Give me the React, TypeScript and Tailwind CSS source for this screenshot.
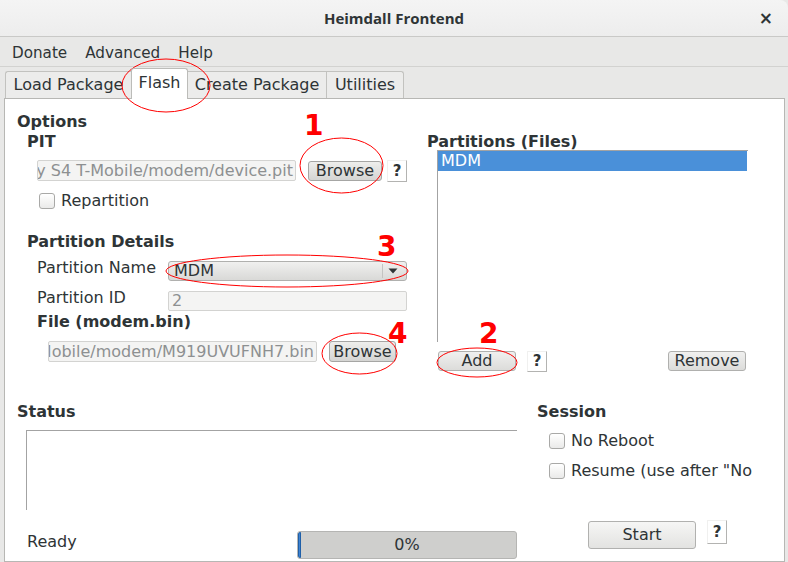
import React from "react";

function QBtn({ h = 22 }: { h?: number }) {
  return (
    <div
      className={`w-[20px] ${h === 22 ? "h-[22px]" : h === 21 ? "h-[21px]" : "h-[24px]"} border-t border-l border-t-[#f0f0ef] border-l-[#f0f0ef] border-r border-b border-r-[#b3b3b1] border-b-[#b3b3b1] bg-white flex items-center justify-center font-bold text-[15px] leading-none text-[#2e3436]`}
    >
      ?
    </div>
  );
}

function Check({ label }: { label: string }) {
  return (
    <div className="flex items-center h-[20px] gap-[6px] whitespace-nowrap">
      <div className="w-[16px] h-[16px] shrink-0 rounded-[3px] border border-[#a9a9a7] bg-linear-to-b from-white to-[#eaeae9]" />
      <span>{label}</span>
    </div>
  );
}

function Field({ w, text }: { w: string; text: string }) {
  return (
    <div
      className={`${w} h-[21px] rounded-[2px] border border-[#d3d3d1] bg-[#f4f4f3] overflow-hidden flex justify-end items-center pr-[2px]`}
    >
      <span className="whitespace-nowrap text-[#8d9091] leading-none">{text}</span>
    </div>
  );
}

export default function App() {
  return (
    <div className="relative w-[788px] h-[562px] overflow-hidden bg-[#e8e8e7] font-['DejaVu_Sans',sans-serif] text-[16px] text-[#2e3436] flex flex-col">
      {/* title bar */}
      <div className="h-[37px] shrink-0 grid grid-cols-[1fr_auto_1fr] items-center bg-linear-to-b from-[#f4f4f4] to-[#ededed] border-b border-[#c9c9c7] rounded-tr-[8px]">
        <div />
        <div className="pt-[1px] font-['Open_Sans',sans-serif] font-bold text-[15px] text-[#2e3436]">Heimdall Frontend</div>
        <div className="flex justify-end pr-[15px] font-bold text-[17px] leading-none">×</div>
      </div>

      {/* menu bar */}
      <div className="h-[30px] shrink-0 flex items-center pt-[4px] pl-[12px] gap-[18px] text-[15.2px] border-b border-[#d2d2d0]">
        <span>Donate</span>
        <span>Advanced</span>
        <span>Help</span>
      </div>

      {/* tabs */}
      <div className="h-[31px] shrink-0 flex items-end pl-[5px]">
        <div className="w-[126px] h-[27px] pb-[1px] flex items-center justify-center border-t border-l border-[#c2c2bf] rounded-tl-[3px] bg-[#ececeb]">
          Load Package
        </div>
        <div className="relative z-10 w-[57px] h-[31px] mb-[-1px] pb-[2px] flex items-center justify-center border-t border-l border-r border-[#bcbcb9] rounded-t-[3px] bg-white">
          Flash
        </div>
        <div className="w-[139px] h-[27px] pb-[1px] flex items-center justify-center border-t border-r border-[#c2c2bf] bg-[#ececeb]">
          Create Package
        </div>
        <div className="w-[77px] h-[27px] pb-[1px] flex items-center justify-center border-t border-r border-[#c2c2bf] rounded-tr-[3px] bg-[#ececeb]">
          Utilities
        </div>
      </div>

      {/* panel */}
      <div className="ml-[4px] w-[781px] flex-1 border border-[#b7b7b4] bg-white pl-[12px] pt-[12px] flex flex-col">
        {/* top section */}
        <div className="flex">
          {/* left column */}
          <div className="w-[390px] flex flex-col">
            <div className="h-[20px] leading-[20px] pt-[1px] font-bold">Options</div>
            <div className="h-[20px] leading-[20px] pt-[1px] font-bold ml-[10px]">PIT</div>
            <div className="mt-[9px] ml-[20px] flex items-start h-[22px]">
              <Field w="w-[259px]" text="/home/user/Samsung Galaxy S4 T-Mobile/modem/device.pit" />
              <div className="ml-[12px] mt-[1px] w-[74px] h-[20px] rounded-[3px] border border-[#a6a6a4] bg-linear-to-b from-[#eeeeec] to-[#d5d5d3] flex items-center justify-center">
                Browse
              </div>
              <div className="ml-[5px]">
                <QBtn />
              </div>
            </div>
            <div className="mt-[8px] ml-[22px] pt-[1px]">
              <Check label="Repartition" />
            </div>
            <div className="mt-[20px] ml-[10px] h-[20px] leading-[20px] pt-[1px] font-bold">Partition Details</div>
            <div className="mt-[10px] ml-[20px] flex items-start h-[20px]">
              <div className="w-[131px] -mt-[3px] h-[20px] leading-[20px]">Partition Name</div>
              <div className="w-[239px] h-[20px] rounded-[3px] border border-[#b0b0ae] bg-linear-to-b from-[#f0f0ef] to-[#d9d9d7] flex items-center pl-[5px] pr-[8px]">
                <span className="flex-1">MDM</span>
                <div className="w-px h-[14px] bg-[#c4c4c2] mr-[5px]" />
                <svg width="10" height="6" viewBox="0 0 10 6">
                  <path d="M0.5 0.5 L9.5 0.5 L5 5.5 Z" fill="#2e3436" />
                </svg>
              </div>
            </div>
            <div className="mt-[10px] ml-[20px] flex items-start h-[20px]">
              <div className="w-[131px] -mt-[3px] h-[20px] leading-[20px]">Partition ID</div>
              <div className="w-[239px] h-[20px] rounded-[2px] border border-[#d3d3d1] bg-[#f4f4f3] flex items-center pl-[3px] text-[#8d9091]">
                2
              </div>
            </div>
            <div className="ml-[20px] h-[20px] leading-[20px] pt-[1px] font-bold">File (modem.bin)</div>
            <div className="mt-[10px] ml-[31px] flex items-start h-[21px]">
              <Field w="w-[269px]" text="/home/user/Samsung Galaxy S4 T-Mobile/modem/M919UVUFNH7.bin" />
              <div className="ml-[12px] w-[67px] h-[21px] rounded-[3px] border border-[#a6a6a4] bg-linear-to-b from-[#eeeeec] to-[#d5d5d3] flex items-center justify-center">
                Browse
              </div>
            </div>
          </div>

          {/* right column */}
          <div className="ml-[20px] w-[321px] flex flex-col">
            <div className="mt-[20px] h-[20px] leading-[20px] pt-[1px] font-bold">Partitions (Files)</div>
            <div className="mt-[-1px] ml-[10px] w-[311px] h-[192px] border-t border-l border-[#a3a3a3] bg-white">
              <div className="h-[20px] mr-[1px] bg-[#4a90d9] text-white flex items-center pl-[3px]">MDM</div>
            </div>
            <div className="mt-[9px] ml-[11px] mr-[2px] flex items-start">
              <div className="w-[78px] h-[20px] rounded-[3px] border border-[#b0b0ae] bg-linear-to-b from-[#f0f0ef] to-[#dcdcda] flex items-center justify-center">
                Add
              </div>
              <div className="ml-[11px]">
                <QBtn h={21} />
              </div>
              <div className="ml-auto w-[78px] h-[20px] rounded-[3px] border border-[#b0b0ae] bg-linear-to-b from-[#f0f0ef] to-[#dcdcda] flex items-center justify-center">
                Remove
              </div>
            </div>
          </div>
        </div>

        {/* bottom section */}
        <div className="mt-[29px] flex">
          <div className="w-[500px] flex flex-col">
            <div className="h-[20px] leading-[20px] pt-[1px] font-bold">Status</div>
            <div className="mt-[9px] ml-[9px] w-[491px] h-[80px] border-t border-l border-[#a3a3a3] bg-white" />
            <div className="mt-[21px] ml-[10px] flex items-start">
              <div className="w-[270px] h-[20px] leading-[20px] pt-[1px]">Ready</div>
              <div className="relative w-[220px] h-[28px] rounded-[3px] border border-[#b5b5b3] bg-[#cfcfcd] flex items-center justify-center overflow-hidden">
                <div className="absolute left-0 top-0 bottom-0 w-[3px] bg-[#3f84d2] border border-[#1f5fa8] rounded-l-[2px]" />
                <span>0%</span>
              </div>
            </div>
          </div>
          <div className="ml-[20px] w-[215px] overflow-hidden flex flex-col">
            <div className="h-[20px] leading-[20px] pt-[1px] font-bold">Session</div>
            <div className="mt-[10px] ml-[12px]">
              <Check label="No Reboot" />
            </div>
            <div className="mt-[9px] ml-[12px] pt-[1px]">
              <Check label={'Resume (use after "No Reboot")'} />
            </div>
            <div className="mt-[39px] ml-[51px] flex items-start">
              <div className="mt-[1px] w-[108px] h-[28px] rounded-[3px] border border-[#b1b1af] bg-linear-to-b from-[#f6f6f5] to-[#e3e3e1] flex items-center justify-center">
                Start
              </div>
              <div className="ml-[11px]">
                <QBtn h={24} />
              </div>
            </div>
          </div>
        </div>
      </div>

      {/* red annotations (overlay) */}
      <svg className="absolute left-0 top-0 pointer-events-none" width="788" height="562" viewBox="0 0 788 562">
        <g fill="none" stroke="#ff0000" strokeWidth="1">
          <ellipse cx="166" cy="85.5" rx="44" ry="26.5" />
          <ellipse cx="341.5" cy="165.5" rx="41.5" ry="27.5" />
          <ellipse cx="287" cy="271" rx="121" ry="16" />
          <ellipse cx="359.5" cy="353.5" rx="37.5" ry="20.5" />
          <ellipse cx="477" cy="362.5" rx="40" ry="14.5" />
        </g>
      </svg>
      <div className="absolute left-[304px] top-[112px] text-[28px] leading-[28px] font-bold text-[#ff0000]">1</div>
      <div className="absolute left-[377px] top-[233px] text-[28px] leading-[28px] font-bold text-[#ff0000]">3</div>
      <div className="absolute left-[388px] top-[320px] text-[28px] leading-[28px] font-bold text-[#ff0000]">4</div>
      <div className="absolute left-[479px] top-[320px] text-[28px] leading-[28px] font-bold text-[#ff0000]">2</div>
    </div>
  );
}
